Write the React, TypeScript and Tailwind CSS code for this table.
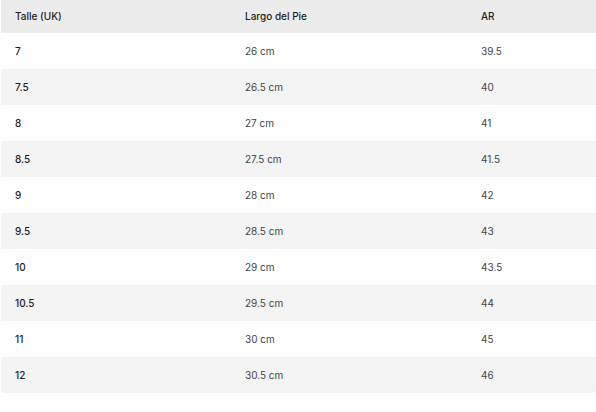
const rows: [string, string, string][] = [
  ['7', '26 cm', '39.5'],
  ['7.5', '26.5 cm', '40'],
  ['8', '27 cm', '41'],
  ['8.5', '27.5 cm', '41.5'],
  ['9', '28 cm', '42'],
  ['9.5', '28.5 cm', '43'],
  ['10', '29 cm', '43.5'],
  ['10.5', '29.5 cm', '44'],
  ['11', '30 cm', '45'],
  ['12', '30.5 cm', '46'],
]

export default function App() {
  return (
    <div className="w-[596px] h-[412px] bg-white pl-px font-['Inter',sans-serif]">
      <div className="overflow-hidden rounded-b-[4px]">
        {/* Header */}
        <div className="grid grid-cols-[230px_236px_1fr] h-[33px] items-center bg-[#ececec] text-[10px] font-medium text-[#1e1e1e]">
          <div className="pl-[14px]">Talle (UK)</div>
          <div className="pl-[14px]">Largo del Pie</div>
          <div className="pl-[14px]">AR</div>
        </div>

        {/* Rows */}
        {rows.map(([uk, cm, ar], i) => (
          <div
            key={uk}
            className={
              'grid grid-cols-[230px_236px_1fr] h-[36px] items-center text-[10px] ' +
              (i % 2 === 1 ? 'bg-[#f4f4f4]' : 'bg-white')
            }
          >
            <div className="pl-[14px] font-medium text-[#1e1e1e]">{uk}</div>
            <div className="pl-[14px] text-[#444]">{cm}</div>
            <div className="pl-[14px] text-[#444]">{ar}</div>
          </div>
        ))}
      </div>
    </div>
  )
}
